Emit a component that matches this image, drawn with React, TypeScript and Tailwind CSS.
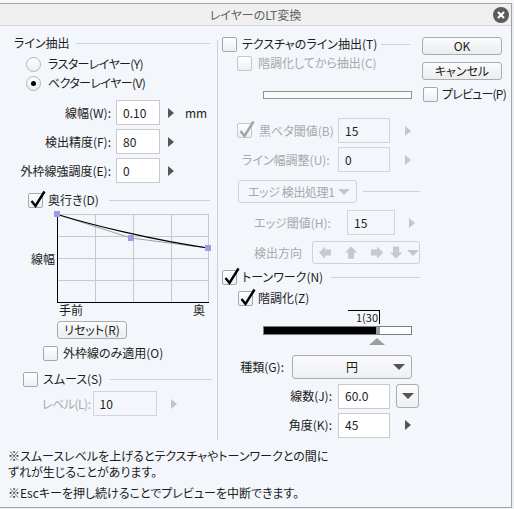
import type { ReactNode } from 'react'

const dim = 'text-[#a7a9ad]'

function Check({ on = false, off = false }: { on?: boolean; off?: boolean }) {
  return (
    <span
      className={`relative inline-block h-[15px] w-[15px] shrink-0 rounded-[2px] border ${
        off ? 'border-[#c4c7cc]' : 'border-[#a4a7ab]'
      } bg-[linear-gradient(#ffffff,#eceff3)]`}
    >
      {on && (
        <svg className="absolute -top-[4px] left-[1px] overflow-visible" width="16" height="18" viewBox="0 0 16 18">
          <path d="M1.5 11 L5.5 16 L14.5 1.5" fill="none" stroke={off ? '#a3a3a3' : '#000'} strokeWidth="2.4" />
        </svg>
      )}
    </span>
  )
}

function Radio({ on = false }: { on?: boolean }) {
  return (
    <span className="flex h-[15px] w-[15px] shrink-0 items-center justify-center rounded-full border border-[#b1b4b8] bg-[linear-gradient(#ffffff,#eaedf1)]">
      {on && <span className="h-[5px] w-[5px] rounded-full bg-black" />}
    </span>
  )
}

function Tri({ off = false }: { off?: boolean }) {
  return (
    <span
      className={`inline-block h-0 w-0 border-y-[5px] border-l-[6px] border-y-transparent ${
        off ? 'border-l-[#c3c6ca]' : 'border-l-[#555555]'
      }`}
    />
  )
}

function Down({ off = false }: { off?: boolean }) {
  return (
    <span
      className={`inline-block h-0 w-0 border-x-[6px] border-t-[6px] border-x-transparent ${
        off ? 'border-t-[#c3c6ca]' : 'border-t-[#555555]'
      }`}
    />
  )
}

function Field({ children, w, off = false }: { children: ReactNode; w: string; off?: boolean }) {
  return (
    <div
      className={`flex h-[25px] shrink-0 items-center border pl-[6px] ${
        off ? 'border-[#d2d5d9] bg-[#f3f6fa]' : 'border-[#c8cacd] bg-white'
      } ${w}`}
    >
      {children}
    </div>
  )
}

function Rule({ className = '' }: { className?: string }) {
  return <span className={`h-px flex-1 bg-[#cdd1d6] ${className}`} />
}

function Btn({ children, w }: { children: ReactNode; w: string }) {
  return (
    <div
      className={`flex h-[18px] items-center justify-center rounded-[3px] border border-[#a9acb0] bg-[linear-gradient(#fbfbfb,#eaecef)] ${w}`}
    >
      {children}
    </div>
  )
}

function Arrow({ d, className = '' }: { d: string; className?: string }) {
  return (
    <svg className={className} width="13" height="13" viewBox="0 0 12 12">
      <path d={d} fill="#c6c9cd" />
    </svg>
  )
}

function DepthGraph() {
  return (
    <svg width="152" height="89" viewBox="0 0 152 89" className="overflow-visible">
      <rect x="0.5" y="0.5" width="151" height="88" fill="none" stroke="#c6c9cd" />
      {[38.5, 76.5, 114.5].map((x) => (
        <line key={x} x1={x} y1="0" x2={x} y2="89" stroke="#c6c9cd" />
      ))}
      {[22.5, 44.5, 66.5].map((y) => (
        <line key={y} x1="0" y1={y} x2="152" y2={y} stroke="#c6c9cd" />
      ))}
      <line x1="0.5" y1="0" x2="0.5" y2="89" stroke="#000" />
      <line x1="0" y1="88.5" x2="152" y2="88.5" stroke="#000" />
      <polyline points="0.5,0.5 74,24 151,34" fill="none" stroke="#9ea0a4" />
      <path d="M0.5 0.5 C 35 11, 95 26, 151 34" fill="none" stroke="#000" strokeWidth="1.2" />
      <rect x="-3" y="-3" width="6" height="6" fill="#9c9ce2" />
      <rect x="71" y="21" width="6" height="6" fill="#9c9ce2" />
      <rect x="148" y="31" width="6" height="6" fill="#9c9ce2" />
    </svg>
  )
}

export default function App() {
  return (
    <div className="h-[509px] w-[514px] overflow-hidden whitespace-nowrap bg-[#eceef1] font-['Noto_Sans_CJK_JP',sans-serif] text-[12px] leading-[16px] text-[#1c1c1c] [font-feature-settings:'palt']">
      <div className="h-[3px] bg-[#f7f7f7]" />
      <div className="flex h-[505px] w-[512px] flex-col border-t border-r border-b border-[#a3a5a8] bg-[#f3f6fa]">
        {/* title bar */}
        <div className="relative flex h-[22px] items-center justify-center border-b border-[#d3d5d8] bg-[#efefef] text-[#5f5f5f]">
          レイヤーのLT変換
          <svg className="absolute right-[2px] top-[3px]" width="16" height="16" viewBox="0 0 16 16">
            <circle cx="8" cy="8" r="8" fill="#5b5b5b" />
            <path d="M5 5 L11 11 M11 5 L5 11" stroke="#fff" strokeWidth="2.2" />
          </svg>
        </div>

        <div className="flex h-[414px]">
          {/* line extraction */}
          <div className="flex w-[217px] flex-col">
            <div className="mt-[9px] flex h-[16px] items-center pl-[14px] pr-[7px]">
              <span>ライン抽出</span>
              <Rule className="ml-[6px]" />
            </div>
            <div className="mt-[5px] flex h-[16px] items-center pl-[26px]">
              <Radio />
              <span className="ml-[7px] tracking-[-0.6px]">ラスターレイヤー(Y)</span>
            </div>
            <div className="mt-[3px] flex h-[16px] items-center pl-[26px]">
              <Radio on />
              <span className="ml-[7px] tracking-[-0.6px]">ベクターレイヤー(V)</span>
            </div>
            <div className="mt-[9px] flex h-[25px] items-center">
              <span className="w-[111px] text-right">線幅(W):</span>
              <div className="ml-[5px]">
                <Field w="w-[44px]">0.10</Field>
              </div>
              <span className="ml-[8px] flex">
                <Tri />
              </span>
              <span className="ml-[11px]">mm</span>
            </div>
            <div className="mt-[4px] flex h-[25px] items-center">
              <span className="w-[111px] text-right">検出精度(F):</span>
              <div className="ml-[5px]">
                <Field w="w-[44px]">80</Field>
              </div>
              <span className="ml-[8px] flex">
                <Tri />
              </span>
            </div>
            <div className="mt-[4px] flex h-[25px] items-center">
              <span className="w-[111px] text-right">外枠線強調度(E):</span>
              <div className="ml-[5px]">
                <Field w="w-[44px]">0</Field>
              </div>
              <span className="ml-[8px] flex">
                <Tri />
              </span>
            </div>
            <div className="mt-[9px] flex h-[16px] items-center pl-[28px] pr-[7px]">
              <Check on />
              <span className="ml-[5px]">奥行き(D)</span>
              <Rule className="ml-[10px]" />
            </div>
            <div className="mt-[6px] flex h-[89px] items-center">
              <span className="w-[57px] pr-[2px] text-right">線幅</span>
              <DepthGraph />
            </div>
            <div className="flex h-[14px] items-center justify-between pl-[59px] pr-[12px]">
              <span>手前</span>
              <span>奥</span>
            </div>
            <div className="mt-[4px] pl-[57px]">
              <Btn w="w-[70px]">リセット(R)</Btn>
            </div>
            <div className="mt-[6px] flex h-[16px] items-center pl-[43px]">
              <Check />
              <span className="ml-[5px]">外枠線のみ適用(O)</span>
            </div>
            <div className="mt-[10px] flex h-[16px] items-center pl-[23px] pr-[5px]">
              <Check />
              <span className="ml-[5px]">スムース(S)</span>
              <Rule className="ml-[8px]" />
            </div>
            <div className="mt-[4px] flex h-[25px] items-center pl-[42px]">
              <span className={`tracking-[-0.5px] ${dim}`}>レベル(L):</span>
              <div className="ml-[2px]">
                <Field w="w-[64px]" off>
                  10
                </Field>
              </div>
              <span className="ml-[14px] flex">
                <Tri off />
              </span>
            </div>
          </div>

          <div className="mt-[14px] w-px bg-[#cdd1d6]" />

          {/* texture + tone work */}
          <div className="flex w-[202px] flex-col">
            <div className="mt-[10px] flex h-[16px] items-center pl-[4px] pr-[10px]">
              <Check />
              <span className="ml-[5px]">テクスチャのライン抽出(T)</span>
              <Rule className="ml-[4px]" />
            </div>
            <div className="mt-[3px] flex h-[16px] items-center pl-[19px]">
              <Check off />
              <span className={`ml-[6px] ${dim}`}>階調化してから抽出(C)</span>
            </div>
            <div className="ml-[45px] mt-[20px] h-[8px] w-[149px] border border-[#8f9194] bg-[#fafafa]" />
            <div className="mt-[19px] flex h-[25px] items-center">
              <div className="flex w-[120px] items-center pl-[19px]">
                <Check on off />
                <span className={`ml-[7px] ${dim}`}>黒ベタ閾値(B)</span>
              </div>
              <Field w="w-[52px]" off>
                15
              </Field>
              <span className="ml-[15px] flex">
                <Tri off />
              </span>
            </div>
            <div className="mt-[4px] flex h-[25px] items-center">
              <span className={`w-[120px] pl-[24px] ${dim}`}>ライン幅調整(U):</span>
              <Field w="w-[52px]" off>
                0
              </Field>
              <span className="ml-[15px] flex">
                <Tri off />
              </span>
            </div>
            <div className="mt-[8px] flex h-[23px] items-center pl-[20px]">
              <div className={`flex h-[23px] w-[119px] items-center justify-between rounded-[3px] border border-[#cfd3d8] pl-[9px] pr-[6px] ${dim}`}>
                <span className="tracking-[-0.4px]">エッジ 検出処理1</span>
                <Down off />
              </div>
              <Rule className="ml-[6px]" />
            </div>
            <div className="mt-[7px] flex h-[25px] items-center">
              <span className={`w-[129px] pl-[36px] ${dim}`}>エッジ閾値(H):</span>
              <Field w="w-[48px]" off>
                15
              </Field>
              <span className="ml-[14px] flex">
                <Tri off />
              </span>
            </div>
            <div className="mt-[6px] flex h-[23px] items-center">
              <span className={`w-[94px] pl-[36px] ${dim}`}>検出方向</span>
              <div className="flex h-[23px] w-[108px] items-center rounded-[3px] border border-[#cfd3d8] pl-[6px]">
                <Arrow d="M0 6 L6 0 L6 3 L12 3 L12 9 L6 9 L6 12 Z" />
                <Arrow className="ml-[14px]" d="M6 0 L12 6 L9 6 L9 12 L3 12 L3 6 L0 6 Z" />
                <Arrow className="ml-[13px]" d="M12 6 L6 0 L6 3 L0 3 L0 9 L6 9 L6 12 Z" />
                <Arrow className="ml-[7px]" d="M6 12 L12 6 L9 6 L9 0 L3 0 L3 6 L0 6 Z" />
                <span className="ml-[5px] flex">
                  <Down off />
                </span>
              </div>
            </div>
            <div className="mt-[5px] flex h-[16px] items-center pl-[4px]">
              <Check on />
              <span className="ml-[5px]">トーンワーク(N)</span>
              <Rule className="ml-[8px]" />
            </div>
            <div className="mt-[5px] flex h-[16px] items-center pl-[20px]">
              <Check on />
              <span className="ml-[5px]">階調化(Z)</span>
            </div>
            <div className="ml-[130px] mt-[4px] h-[14px] w-[32px] border-t border-r border-black pr-[1px] text-right text-[11px] leading-[13px]">
              1(30
            </div>
            <div className="ml-[45px] mt-[2px] flex h-[9px] w-[149px] border border-[#7d7f82] bg-white">
              <span className="w-[112px] bg-black" />
              <span className="w-[4px] bg-[#9a9a9a]" />
            </div>
            <div className="ml-[151px] mt-[3px] h-0 w-0 border-x-[8px] border-b-[7px] border-x-transparent border-b-[#9c9ea1]" />
            <div className="mt-[10px] flex h-[24px] items-center">
              <span className="w-[74px] pr-[8px] text-right">種類(G):</span>
              <div className="relative flex h-[24px] w-[120px] items-center justify-center rounded-[3px] border border-[#a9acb0] bg-[linear-gradient(#fbfbfb,#eef0f3)]">
                円
                <span className="absolute right-[6px] top-[8px] flex">
                  <Down />
                </span>
              </div>
            </div>
            <div className="mt-[5px] flex h-[24px] items-center">
              <span className="w-[120px] pr-[6px] text-right">線数(J):</span>
              <Field w="w-[52px]">60.0</Field>
              <div className="ml-[6px] flex h-[24px] w-[23px] items-center justify-center rounded-[3px] border border-[#a9acb0] bg-[linear-gradient(#fbfbfb,#eef0f3)]">
                <Down />
              </div>
            </div>
            <div className="mt-[5px] flex h-[24px] items-center">
              <span className="w-[120px] pr-[6px] text-right">角度(K):</span>
              <Field w="w-[52px]">45</Field>
              <span className="ml-[15px] flex">
                <Tri />
              </span>
            </div>
          </div>

          {/* dialog buttons */}
          <div className="flex w-[91px] flex-col pl-[2px]">
            <div className="mt-[11px]">
              <Btn w="w-[80px]">OK</Btn>
            </div>
            <div className="mt-[7px]">
              <Btn w="w-[80px]">キャンセル</Btn>
            </div>
            <div className="mt-[6px] flex h-[16px] items-center pl-[1px]">
              <Check />
              <span className="ml-[4px] tracking-[-0.8px]">プレビュー(P)</span>
            </div>
          </div>
        </div>

        <div className="pl-[8px] pt-[8px]">
          <div>※スムースレベルを上げるとテクスチャやトーンワークとの間に</div>
          <div>ずれが生じることがあります。</div>
          <div className="mt-[5px]">※Escキーを押し続けることでプレビューを中断できます。</div>
        </div>
      </div>
    </div>
  )
}
